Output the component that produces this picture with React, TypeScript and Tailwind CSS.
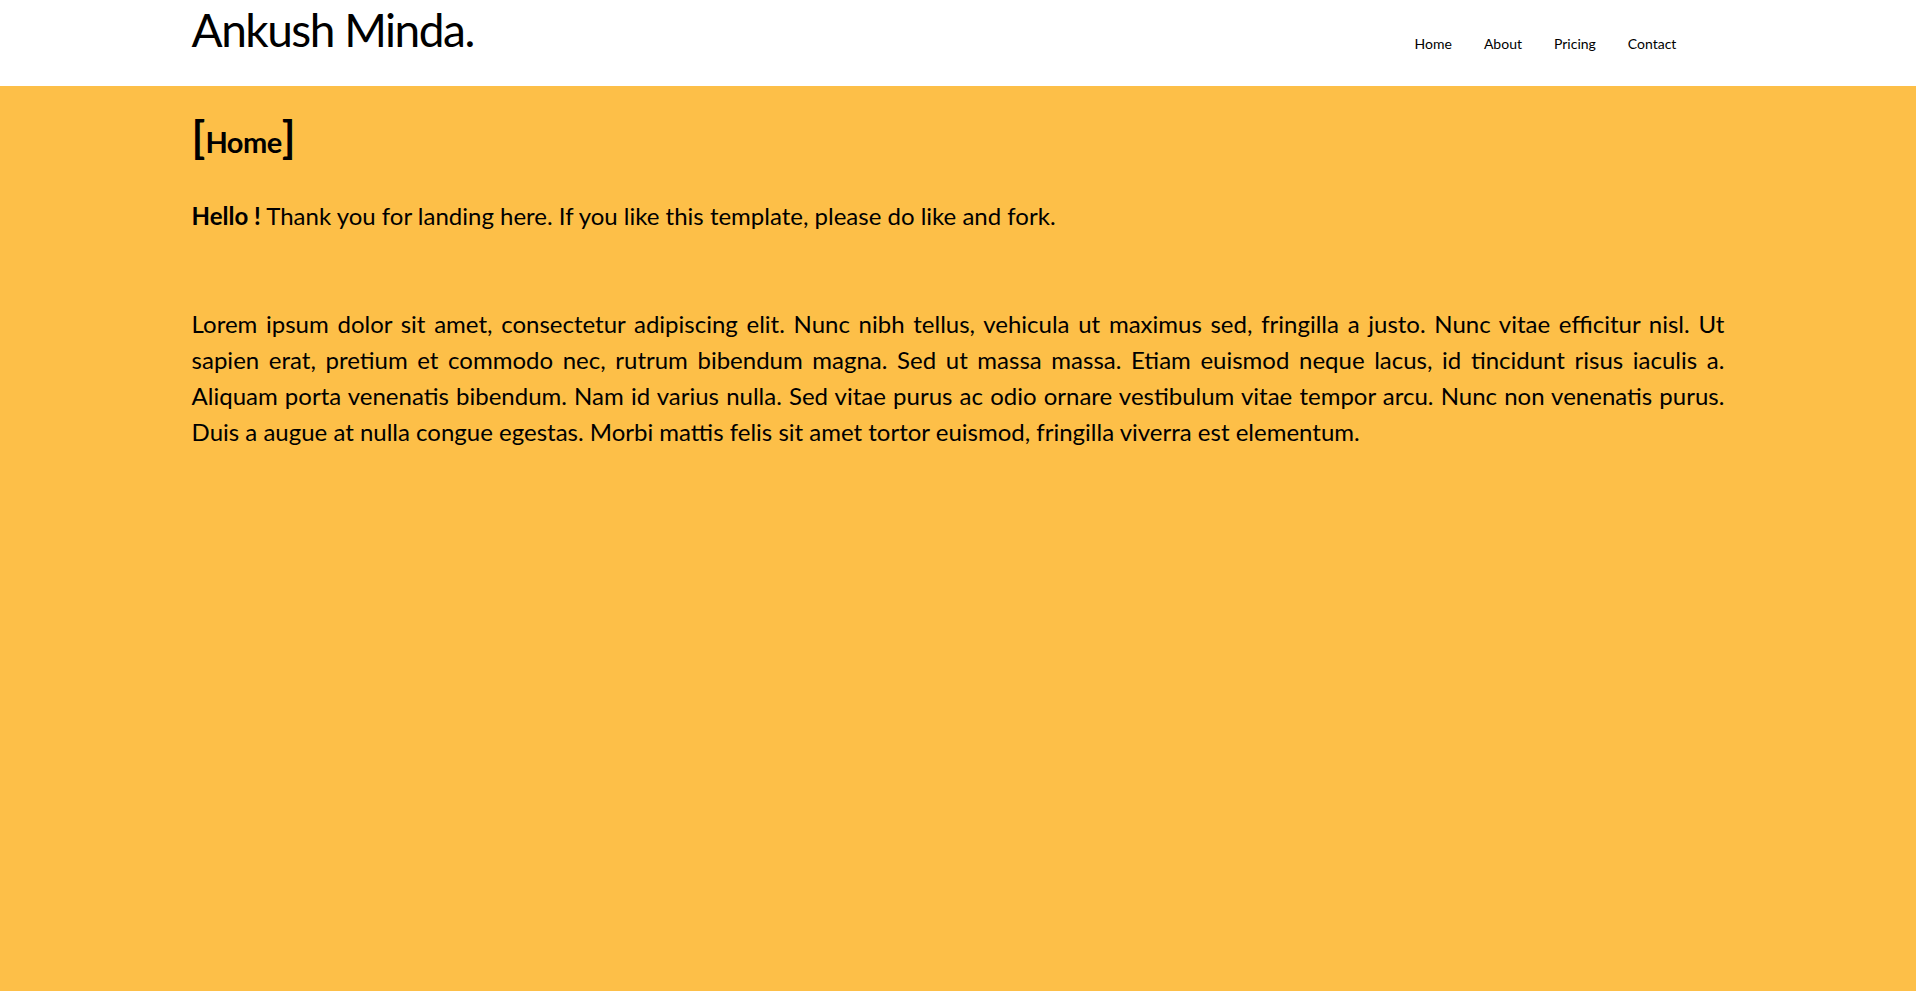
import React from "react";

const font = { fontFamily: 'Lato, "Noto Sans", sans-serif' };

const lines = [
  "Lorem ipsum dolor sit amet, consectetur adipiscing elit. Nunc nibh tellus, vehicula ut maximus sed, fringilla a justo. Nunc vitae efficitur nisl. Ut",
  "sapien erat, pretium et commodo nec, rutrum bibendum magna. Sed ut massa massa. Etiam euismod neque lacus, id tincidunt risus iaculis a.",
  "Aliquam porta venenatis bibendum. Nam id varius nulla. Sed vitae purus ac odio ornare vestibulum vitae tempor arcu. Nunc non venenatis purus.",
];

export default function App() {
  const menuItems = ["Home", "About", "Pricing", "Contact"];

  return (
    <div className="min-h-[991px] bg-[#fdbf48] text-black" style={font}>
      {/* Header */}
      <header className="h-[86px] bg-white">
        <div className="mx-auto flex w-[80%] items-start justify-between">
          <h1 className="text-[46px] leading-[60px] font-normal tracking-[-1.5px]">Ankush Minda.</h1>
          <nav className="mt-[34px] flex gap-[32px] pr-[48px] text-[14px] leading-[20px]">
            {menuItems.map((item) => (
              <a key={item} href={`#${item.toLowerCase()}`}>
                {item}
              </a>
            ))}
          </nav>
        </div>
      </header>

      {/* Content */}
      <main className="mx-auto w-[80%] pt-[28px]">
        <h2 className="flex items-baseline font-bold">
          <span className="text-[44px] leading-[44px]">[</span>
          <span className="text-[29px] leading-[44px] tracking-[-0.5px]">Home</span>
          <span className="text-[44px] leading-[44px]">]</span>
        </h2>

        <p className="mt-[34px] text-[24px] leading-[36px]">
          <span className="font-bold">Hello !</span> Thank you for landing here. If you like this template, please do like and fork.
        </p>

        <div className="mt-[72px] text-[24px] leading-[36px]">
          {lines.map((line) => (
            <p key={line} className="text-justify [text-align-last:justify]">
              {line}
            </p>
          ))}
          <p>Duis a augue at nulla congue egestas. Morbi mattis felis sit amet tortor euismod, fringilla viverra est elementum.</p>
        </div>
      </main>
    </div>
  );
}
